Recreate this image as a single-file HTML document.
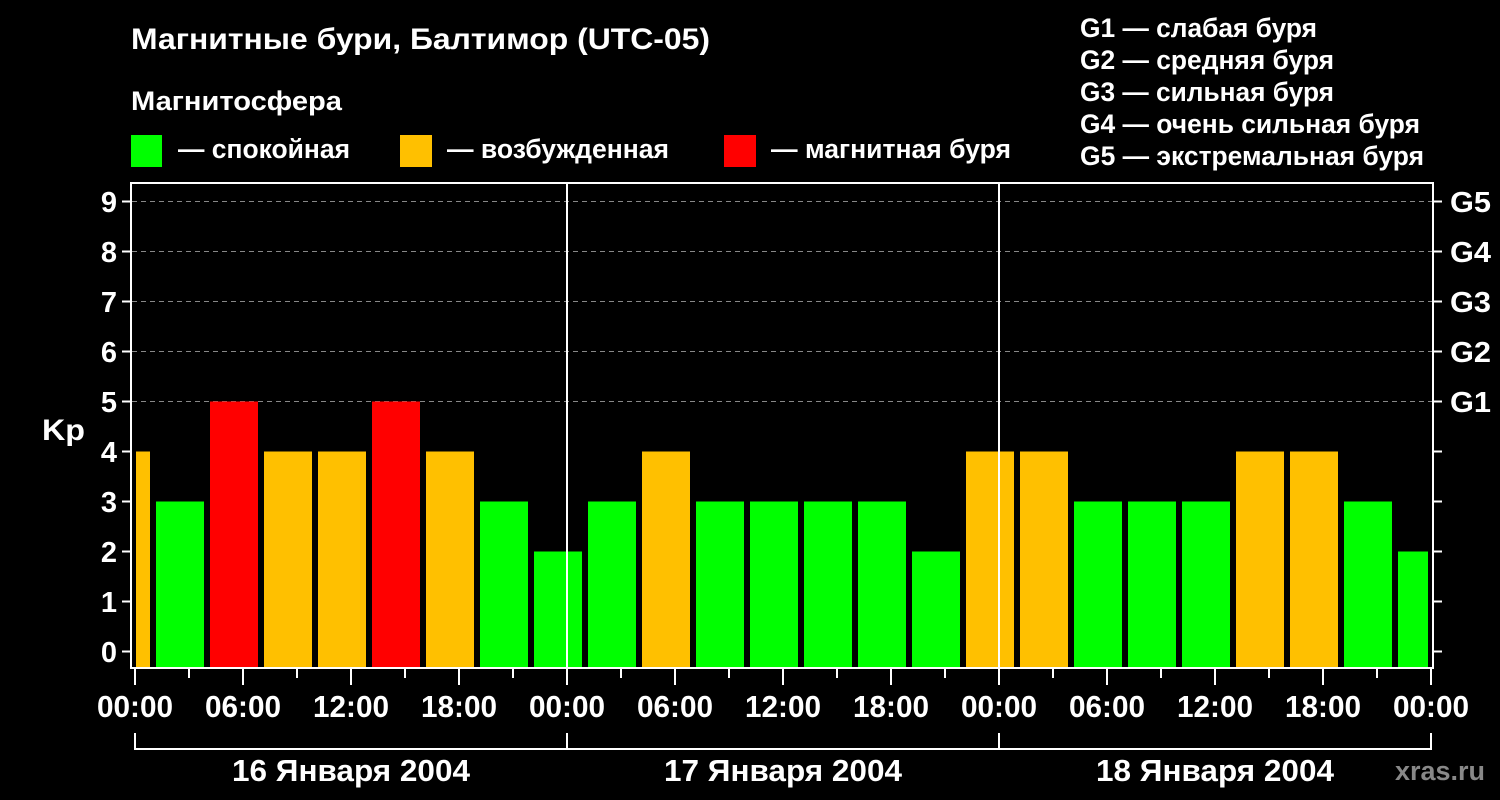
<!DOCTYPE html>
<html><head><meta charset="utf-8"><style>html,body{margin:0;padding:0;background:#000}svg{display:block}</style></head>
<body>
<svg width="1500" height="800" xmlns="http://www.w3.org/2000/svg" font-family="Liberation Sans, sans-serif" font-weight="bold" fill="#fff">
<rect width="1500" height="800" fill="#000"/>
<text x="131" y="49" font-size="30" textLength="579" lengthAdjust="spacingAndGlyphs">Магнитные бури, Балтимор (UTC-05)</text>
<text x="131" y="110" font-size="27" textLength="211" lengthAdjust="spacingAndGlyphs">Магнитосфера</text>
<rect x="131" y="135" width="31" height="32" fill="#00ff00"/>
<text x="178" y="158" font-size="27" textLength="172" lengthAdjust="spacingAndGlyphs">— спокойная</text>
<rect x="400" y="135" width="32" height="32" fill="#ffc000"/>
<text x="447" y="158" font-size="27" textLength="222" lengthAdjust="spacingAndGlyphs">— возбужденная</text>
<rect x="724" y="135" width="32" height="32" fill="#ff0000"/>
<text x="771" y="158" font-size="27" textLength="240" lengthAdjust="spacingAndGlyphs">— магнитная буря</text>
<g font-size="27">
<text x="1080" y="37" textLength="237" lengthAdjust="spacingAndGlyphs">G1 — слабая буря</text>
<text x="1080" y="69" textLength="254" lengthAdjust="spacingAndGlyphs">G2 — средняя буря</text>
<text x="1080" y="101" textLength="254" lengthAdjust="spacingAndGlyphs">G3 — сильная буря</text>
<text x="1080" y="133" textLength="340" lengthAdjust="spacingAndGlyphs">G4 — очень сильная буря</text>
<text x="1080" y="165" textLength="344" lengthAdjust="spacingAndGlyphs">G5 — экстремальная буря</text>
</g>
<g stroke="#888" stroke-width="1" stroke-dasharray="5,4">
<line x1="132" y1="201.5" x2="1432" y2="201.5"/><line x1="132" y1="251.5" x2="1432" y2="251.5"/>
<line x1="132" y1="301.5" x2="1432" y2="301.5"/><line x1="132" y1="351.5" x2="1432" y2="351.5"/>
<line x1="132" y1="401.5" x2="1432" y2="401.5"/>
</g>
<g>
<rect x="136" y="451.5" width="14" height="216" fill="#ffc000"/>
<rect x="156" y="501.5" width="48" height="166" fill="#00ff00"/>
<rect x="210" y="401.5" width="48" height="266" fill="#ff0000"/>
<rect x="264" y="451.5" width="48" height="216" fill="#ffc000"/>
<rect x="318" y="451.5" width="48" height="216" fill="#ffc000"/>
<rect x="372" y="401.5" width="48" height="266" fill="#ff0000"/>
<rect x="426" y="451.5" width="48" height="216" fill="#ffc000"/>
<rect x="480" y="501.5" width="48" height="166" fill="#00ff00"/>
<rect x="534" y="551.5" width="48" height="116" fill="#00ff00"/>
<rect x="588" y="501.5" width="48" height="166" fill="#00ff00"/>
<rect x="642" y="451.5" width="48" height="216" fill="#ffc000"/>
<rect x="696" y="501.5" width="48" height="166" fill="#00ff00"/>
<rect x="750" y="501.5" width="48" height="166" fill="#00ff00"/>
<rect x="804" y="501.5" width="48" height="166" fill="#00ff00"/>
<rect x="858" y="501.5" width="48" height="166" fill="#00ff00"/>
<rect x="912" y="551.5" width="48" height="116" fill="#00ff00"/>
<rect x="966" y="451.5" width="48" height="216" fill="#ffc000"/>
<rect x="1020" y="451.5" width="48" height="216" fill="#ffc000"/>
<rect x="1074" y="501.5" width="48" height="166" fill="#00ff00"/>
<rect x="1128" y="501.5" width="48" height="166" fill="#00ff00"/>
<rect x="1182" y="501.5" width="48" height="166" fill="#00ff00"/>
<rect x="1236" y="451.5" width="48" height="216" fill="#ffc000"/>
<rect x="1290" y="451.5" width="48" height="216" fill="#ffc000"/>
<rect x="1344" y="501.5" width="48" height="166" fill="#00ff00"/>
<rect x="1398" y="551.5" width="30" height="116" fill="#00ff00"/>
</g>
<g stroke="#fff" stroke-width="2" fill="none">
<rect x="131" y="183" width="1302" height="485"/>
<line x1="567" y1="183" x2="567" y2="668"/><line x1="999" y1="183" x2="999" y2="668"/>
<path d="M122 201.5h9M122 251.5h9M122 301.5h9M122 351.5h9M122 401.5h9M122 451.5h9M122 501.5h9M122 551.5h9M122 601.5h9M122 651.5h9"/>
<path d="M1433 201.5h9M1433 251.5h9M1433 301.5h9M1433 351.5h9M1433 401.5h9M1433 451.5h9M1433 501.5h9M1433 551.5h9M1433 601.5h9M1433 651.5h9"/>
<path d="M135 669v16M243 669v16M351 669v16M459 669v16M567 669v16M675 669v16M783 669v16M891 669v16M999 669v16M1107 669v16M1215 669v16M1323 669v16M1431 669v16"/>
<path d="M189 669v9M297 669v9M405 669v9M513 669v9M621 669v9M729 669v9M837 669v9M945 669v9M1053 669v9M1161 669v9M1269 669v9M1377 669v9"/>
<path d="M135 733v16H1431V733M567 733v16M999 733v16"/>
</g>
<g font-size="29" text-anchor="end">
<text x="117" y="212">9</text><text x="117" y="262">8</text><text x="117" y="312">7</text><text x="117" y="362">6</text><text x="117" y="412">5</text>
<text x="117" y="462">4</text><text x="117" y="512">3</text><text x="117" y="562">2</text><text x="117" y="612">1</text><text x="117" y="662">0</text>
</g>
<text x="42" y="440" font-size="30" textLength="43" lengthAdjust="spacingAndGlyphs">Kp</text>
<g font-size="29">
<text x="1450" y="212" textLength="41" lengthAdjust="spacingAndGlyphs">G5</text><text x="1450" y="262" textLength="41" lengthAdjust="spacingAndGlyphs">G4</text><text x="1450" y="312" textLength="41" lengthAdjust="spacingAndGlyphs">G3</text><text x="1450" y="362" textLength="41" lengthAdjust="spacingAndGlyphs">G2</text><text x="1450" y="412" textLength="41" lengthAdjust="spacingAndGlyphs">G1</text>
</g>
<g font-size="31" text-anchor="middle">
<text x="135" y="717" textLength="76" lengthAdjust="spacingAndGlyphs">00:00</text>
<text x="243" y="717" textLength="76" lengthAdjust="spacingAndGlyphs">06:00</text>
<text x="351" y="717" textLength="76" lengthAdjust="spacingAndGlyphs">12:00</text>
<text x="459" y="717" textLength="76" lengthAdjust="spacingAndGlyphs">18:00</text>
<text x="567" y="717" textLength="76" lengthAdjust="spacingAndGlyphs">00:00</text>
<text x="675" y="717" textLength="76" lengthAdjust="spacingAndGlyphs">06:00</text>
<text x="783" y="717" textLength="76" lengthAdjust="spacingAndGlyphs">12:00</text>
<text x="891" y="717" textLength="76" lengthAdjust="spacingAndGlyphs">18:00</text>
<text x="999" y="717" textLength="76" lengthAdjust="spacingAndGlyphs">00:00</text>
<text x="1107" y="717" textLength="76" lengthAdjust="spacingAndGlyphs">06:00</text>
<text x="1215" y="717" textLength="76" lengthAdjust="spacingAndGlyphs">12:00</text>
<text x="1323" y="717" textLength="76" lengthAdjust="spacingAndGlyphs">18:00</text>
<text x="1431" y="717" textLength="76" lengthAdjust="spacingAndGlyphs">00:00</text>
<text x="351" y="781" textLength="238" lengthAdjust="spacingAndGlyphs">16 Января 2004</text>
<text x="783" y="781" textLength="238" lengthAdjust="spacingAndGlyphs">17 Января 2004</text>
<text x="1215" y="781" textLength="238" lengthAdjust="spacingAndGlyphs">18 Января 2004</text>
</g>
<text x="1395" y="780" font-size="27" fill="#888" textLength="90" lengthAdjust="spacingAndGlyphs">xras.ru</text>
</svg>
</body></html>
